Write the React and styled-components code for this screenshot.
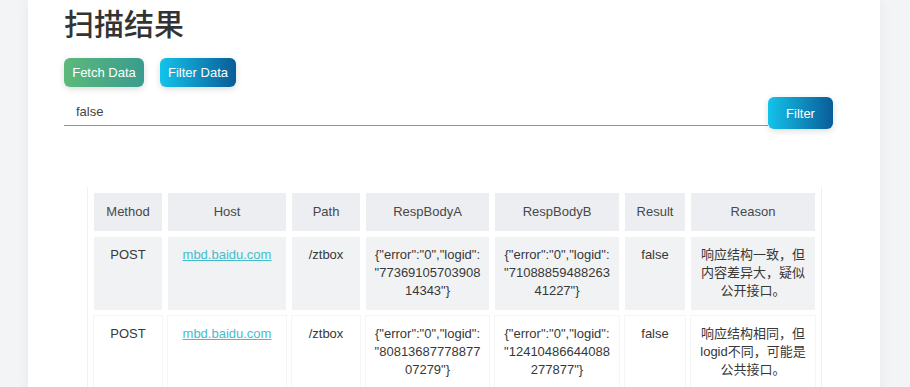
import React, { useState } from "react";
import styled, { createGlobalStyle } from "styled-components";

const GlobalStyle = createGlobalStyle`
  body {
    margin: 0;
    background: #f3f4f6;
    font-family: "Liberation Sans", "Noto Sans CJK SC", sans-serif;
    color: #333;
  }
`;

const Page = styled.div`
  padding-left: 28px;
  width: 910px;
  height: 387px;
  overflow: hidden;
  box-sizing: border-box;
`;

const Card = styled.div`
  width: 852px;
  min-height: 387px;
  background: #fff;
  box-sizing: border-box;
  padding: 4px 36px 0;
  box-shadow: 0 0 14px rgba(0, 0, 0, 0.05);
`;

const Title = styled.h1`
  margin: 0;
  font-family: "Noto Sans CJK SC", sans-serif;
  font-size: 30px;
  line-height: 36px;
  font-weight: 500;
  color: #333;
`;

const Actions = styled.div`
  display: flex;
  gap: 16px;
  margin-top: 18px;
`;

const GradientButton = styled.button`
  flex-shrink: 0;
  height: ${({ $tall }) => ($tall ? "32px" : "29px")};
  padding: 0;
  width: ${({ $w }) => $w}px;
  border: none;
  border-radius: 6px;
  color: #fff;
  font-family: "Liberation Sans", sans-serif;
  font-size: 13px;
  cursor: pointer;
  background: ${({ $variant }) =>
    $variant === "green"
      ? "linear-gradient(90deg, #5cb97a, #3a9c8e)"
      : "linear-gradient(90deg, #13c3ea, #0a5c98)"};
  box-shadow: 0 2px 6px rgba(0, 0, 0, 0.14);
`;

const FilterRow = styled.div`
  display: flex;
  align-items: flex-start;
  margin-top: 10px;
`;

const Input = styled.input`
  width: 680px;
  height: 28px;
  box-sizing: content-box;
  padding: 0 12px;
  border: none;
  border-bottom: 1px solid #6fb06f;
  outline: none;
  font-family: "Liberation Sans", sans-serif;
  font-size: 13px;
  color: #444;
  background: transparent;
`;

const TableWrap = styled.div`
  margin: 58px 0 0 23px;
  width: 735px;
  box-sizing: border-box;
  border-left: 1px solid #f0f0f0;
  border-right: 1px solid #f0f0f0;
`;

const Table = styled.table`
  width: 733px;
  table-layout: fixed;
  border-collapse: separate;
  border-spacing: 6px;
  margin: 0;
  font-size: 13px;
  line-height: 18px;
`;

const Th = styled.th`
  box-sizing: border-box;
  background: #eceef1;
  color: #484848;
  font-weight: 400;
  padding: 10px 4px;
  text-align: center;
`;

const Td = styled.td`
  box-sizing: border-box;
  padding: 9px 6px 10px;
  text-align: center;
  vertical-align: top;
  color: #383838;
  overflow-wrap: anywhere;
  background: ${({ $shade }) => ($shade ? "#f1f2f3" : "#fff")};
  box-shadow: ${({ $shade }) => ($shade ? "none" : "0 0 0 1px #f5f5f5")};
`;

const HostLink = styled.a`
  color: #45bccd;
  text-decoration: underline;
`;

const columns = [
  { label: "Method", w: 68 },
  { label: "Host", w: 118 },
  { label: "Path", w: 68 },
  { label: "RespBodyA", w: 123 },
  { label: "RespBodyB", w: 124 },
  { label: "Result", w: 60 },
  { label: "Reason", w: 124 },
];

const rows = [
  {
    method: "POST",
    host: "mbd.baidu.com",
    path: "/ztbox",
    a: "7736910570390814343",
    b: "7108885948826341227",
    result: "false",
    reason: "响应结构一致，但内容差异大，疑似公开接口。",
  },
  {
    method: "POST",
    host: "mbd.baidu.com",
    path: "/ztbox",
    a: "8081368777887707279",
    b: "12410486644088277877",
    result: "false",
    reason: "响应结构相同，但logid不同，可能是公共接口。",
  },
];

const Body = ({ id }) => (
  <>
    {'{"error":"0","logid":'}
    <wbr />
    {`"${id}"}`}
  </>
);

export default function App() {
  const [query, setQuery] = useState("false");

  return (
    <Page>
      <GlobalStyle />
      <Card>
        <Title>扫描结果</Title>
        <Actions>
          <GradientButton $variant="green" $w={80}>Fetch Data</GradientButton>
          <GradientButton $w={76}>Filter Data</GradientButton>
        </Actions>
        <FilterRow>
          <Input value={query} onChange={(e) => setQuery(e.target.value)} />
          <GradientButton $tall $w={65}>Filter</GradientButton>
        </FilterRow>
        <TableWrap>
          <Table>
            <thead>
              <tr>
                {columns.map((c) => (
                  <Th key={c.label} style={{ width: c.w }}>
                    {c.label}
                  </Th>
                ))}
              </tr>
            </thead>
            <tbody>
              {rows.map((r, i) => (
                <tr key={i}>
                  <Td $shade={i === 0}>{r.method}</Td>
                  <Td $shade={i === 0}>
                    <HostLink href="#">{r.host}</HostLink>
                  </Td>
                  <Td $shade={i === 0}>{r.path}</Td>
                  <Td $shade={i === 0}>
                    <Body id={r.a} />
                  </Td>
                  <Td $shade={i === 0}>
                    <Body id={r.b} />
                  </Td>
                  <Td $shade={i === 0}>{r.result}</Td>
                  <Td $shade={i === 0}>{r.reason}</Td>
                </tr>
              ))}
            </tbody>
          </Table>
        </TableWrap>
      </Card>
    </Page>
  );
}
